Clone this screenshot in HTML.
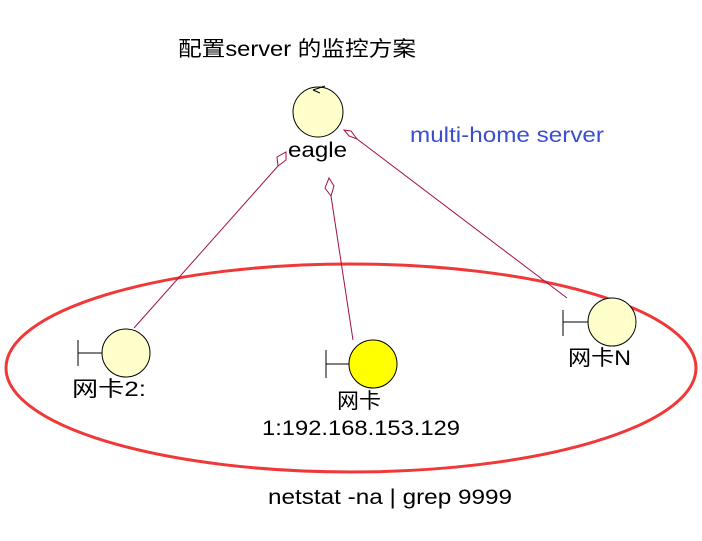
<!DOCTYPE html>
<html><head><style>body{margin:0;background:#fff;}svg{display:block}</style></head><body>
<svg width="702" height="541" xmlns="http://www.w3.org/2000/svg" font-family="Liberation Sans, Noto Sans CJK SC, sans-serif">
<rect width="702" height="541" fill="#fff"/>
<text x="178" y="56" font-size="21" fill="#000" textLength="238" lengthAdjust="spacingAndGlyphs">配置server 的监控方案</text>
<text x="410" y="142" font-size="21" fill="#3a4fd0" textLength="194" lengthAdjust="spacingAndGlyphs">multi-home server</text>
<ellipse cx="351" cy="368" rx="345" ry="104" fill="none" stroke="#f03838" stroke-width="3"/>
<g stroke="#a0104a" stroke-width="1" fill="#fff">
<line x1="134" y1="328" x2="278" y2="166"/>
<path d="M278,166 L277,157 L286,152 L286,160 Z"/>
<line x1="353" y1="340" x2="331" y2="196"/>
<path d="M331,196 L325,188 L329,178 L334,186 Z"/>
<line x1="567" y1="298" x2="357" y2="139"/>
<path d="M357,139 L349,136 L344,130 L351,131 Z"/>
</g>
<g stroke="#000" stroke-width="1">
<circle cx="318" cy="112" r="25" fill="#ffffcc"/>
<path d="M313,90 L325,86 M313,90 L320,93" fill="none"/>
<circle cx="126" cy="353" r="24" fill="#ffffcc"/>
<path d="M78,340 V366 M78,353 H102" fill="none"/>
<circle cx="373" cy="364" r="24" fill="#ffff00"/>
<path d="M326,350 V378 M326,364 H349" fill="none"/>
<circle cx="612" cy="322" r="24" fill="#ffffcc"/>
<path d="M563,310 V336 M563,322 H588" fill="none"/>
</g>
<text x="288" y="157" font-size="21" fill="#000" textLength="59" lengthAdjust="spacingAndGlyphs">eagle</text>
<text x="72" y="396" font-size="21" fill="#000" textLength="74" lengthAdjust="spacingAndGlyphs">网卡2:</text>
<text x="337" y="408" font-size="21" fill="#000" textLength="44" lengthAdjust="spacingAndGlyphs">网卡</text>
<text x="262" y="435" font-size="21" fill="#000" textLength="198" lengthAdjust="spacingAndGlyphs">1:192.168.153.129</text>
<text x="568" y="365" font-size="21" fill="#000" textLength="63" lengthAdjust="spacingAndGlyphs">网卡N</text>
<text x="268" y="504" font-size="21" fill="#000" textLength="244" lengthAdjust="spacingAndGlyphs">netstat -na | grep 9999</text>
</svg>
</body></html>
